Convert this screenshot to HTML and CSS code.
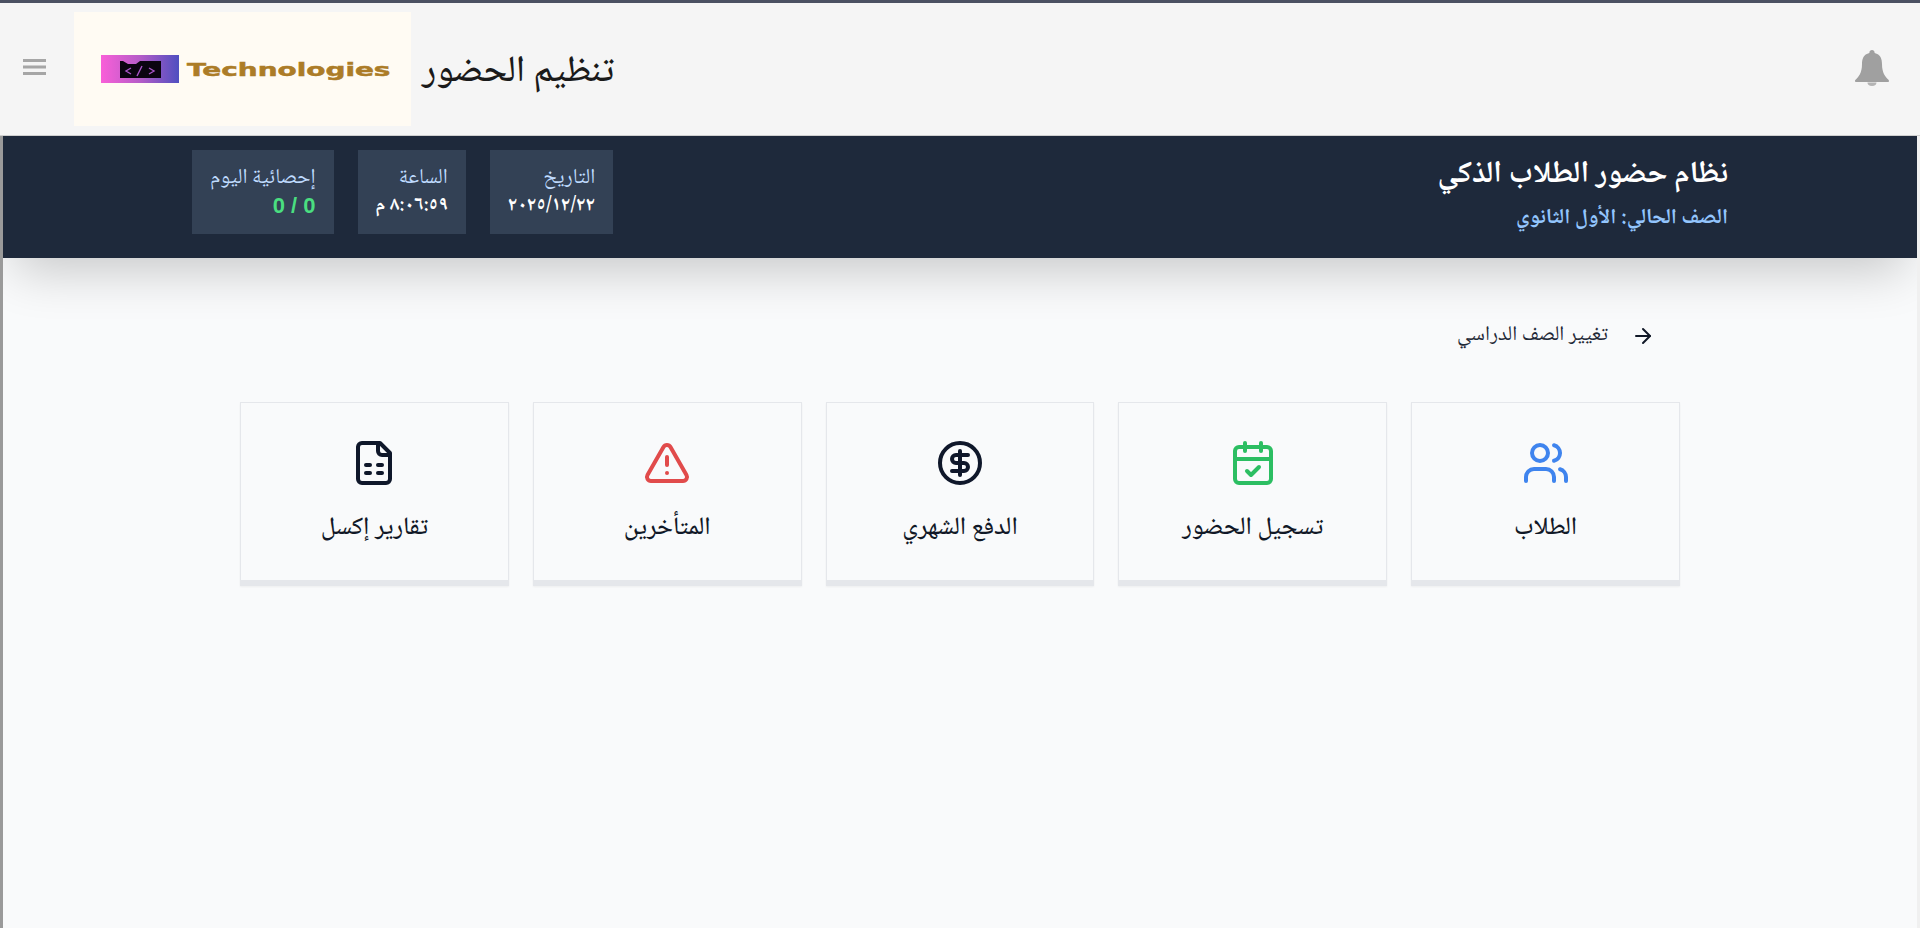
FILE: index.html
```html
<!DOCTYPE html>
<html lang="ar">
<head>
  <meta charset="UTF-8">
  <title>تنظيم الحضور</title>
  <link rel="stylesheet" href="styles.css">
</head>
<body>
  <div class="topline"></div>
  <header class="appbar">
    <div class="appbar-left">
      <button class="menu-btn" aria-label="menu">
        <svg width="24" height="24" viewBox="0 0 24 24" fill="#a6a6a6"><path d="M1 2h23v3H1zM1 8.500h23v3H1zM1 15h23v3H1z"/></svg>
      </button>
      <div class="logo">
        <div class="logo-mark">
          <svg width="41" height="17" viewBox="0 0 41 17">
            <path d="M0 0h3l5 3h8l4-3h21v17H0z" fill="#0a0410"/>
            <path d="M11 7l-5 3 5 3M17 15l5-10M29 7l5 3-5 3" fill="none" stroke="#a855c8" stroke-width="1.400"/>
          </svg>
        </div>
        <span class="logo-text">Technologies</span>
      </div>
      <h1 class="page-title">تنظيم الحضور</h1>
    </div>
    <svg class="bell" width="34" height="36" viewBox="0 0 34 36" fill="#a0a0a0">
      <path d="M17 0c1.500 0 2.600 1.100 2.600 2.600v.4C25.500 4.300 27 9 27 14c0 9 3.500 13 6.200 15.400.8.7.8 1.600.8 1.600 0 .6-.5 1-1.200 1H1.200C.5 32 0 31.600 0 31s0-.9.8-1.600C3.500 27 7 23 7 14c0-5 1.500-9.700 7.400-11v-.4C14.400 1.100 15.500 0 17 0z"/>
      <path d="M12.500 32.500h9a4.500 3.500 0 0 1-9 0z" fill="#b4b4b4"/>
    </svg>
  </header>

  <div class="page">
    <section class="banner">
      <div class="banner-inner">
        <div class="banner-title">
          <h2>نظام حضور الطلاب الذكي</h2>
          <p>الصف الحالي: الأول الثانوي</p>
        </div>
        <div class="stats">
          <div class="stat">
            <span class="stat-label">التاريخ</span>
            <strong class="stat-value">٢٠٢٥/١٢/٢٢</strong>
          </div>
          <div class="stat">
            <span class="stat-label">الساعة</span>
            <strong class="stat-value">٨:٠٦:٥٩ م</strong>
          </div>
          <div class="stat">
            <span class="stat-label">إحصائية اليوم</span>
            <strong class="stat-value green">0 / 0</strong>
          </div>
        </div>
      </div>
    </section>

    <main class="content">
      <button class="back-btn">
        <svg width="24" height="24" viewBox="0 0 24 24" fill="none" stroke="#111827" stroke-width="2" stroke-linecap="round" stroke-linejoin="round"><path d="M5 12h14"/><path d="m12 5 7 7-7 7"/></svg>
        <span>تغيير الصف الدراسي</span>
      </button>

      <div class="cards">
        <a class="card">
          <svg class="card-icon blue" viewBox="0 0 24 24"><path d="M16 21v-2a4 4 0 0 0-4-4H6a4 4 0 0 0-4 4v2"/><circle cx="9" cy="7" r="4"/><path d="M22 21v-2a4 4 0 0 0-3-3.870"/><path d="M16 3.130a4 4 0 0 1 0 7.750"/></svg>
          <span>الطلاب</span>
        </a>
        <a class="card">
          <svg class="card-icon green" viewBox="0 0 24 24"><path d="M8 2v4"/><path d="M16 2v4"/><rect x="3" y="4" width="18" height="18" rx="2"/><path d="M3 10h18"/><path d="m9 16 2 2 4-4"/></svg>
          <span>تسجيل الحضور</span>
        </a>
        <a class="card">
          <svg class="card-icon dark" viewBox="0 0 24 24"><circle cx="12" cy="12" r="10"/><path d="M16 8h-6a2 2 0 1 0 0 4h4a2 2 0 1 1 0 4H8"/><path d="M12 18V6"/></svg>
          <span>الدفع الشهري</span>
        </a>
        <a class="card">
          <svg class="card-icon red" viewBox="0 0 24 24"><path d="m21.730 18-8-14a2 2 0 0 0-3.480 0l-8 14A2 2 0 0 0 4 21h16a2 2 0 0 0 1.730-3"/><path d="M12 9v4"/><path d="M12 17h.01"/></svg>
          <span>المتأخرين</span>
        </a>
        <a class="card">
          <svg class="card-icon dark" viewBox="0 0 24 24"><path d="M15 2H6a2 2 0 0 0-2 2v16a2 2 0 0 0 2 2h12a2 2 0 0 0 2-2V7Z"/><path d="M14 2v4a2 2 0 0 0 2 2h4"/><path d="M8 13h2"/><path d="M14 13h2"/><path d="M8 17h2"/><path d="M14 17h2"/></svg>
          <span>تقارير إكسل</span>
        </a>
      </div>
    </main>
  </div>
</body>
</html>
```

FILE: styles.css
```css
* {
  box-sizing: border-box;
}

html, body {
  height: 100%;
}

body {
  margin: 0;
  font-family: "Noto Naskh Arabic", "Noto Sans Arabic", "DejaVu Sans", sans-serif;
  background-color: #f9fafb;
  color: #111827;
  overflow: hidden;
}

.topline {
  height: 3px;
  background-color: #4b5162;
}

.appbar {
  display: flex;
  align-items: center;
  justify-content: space-between;
  height: 133px;
  padding: 0 31px 0 22px;
  background-color: #f5f5f5;
  border-bottom: 1px solid #cfcfcf;
}

.appbar-left {
  display: flex;
  align-items: center;
}

.menu-btn {
  display: flex;
  padding: 0;
  border: none;
  background: none;
  margin-right: 28px;
}

.logo {
  display: flex;
  align-items: center;
  width: 337px;
  height: 114px;
  padding-left: 27px;
  background-color: #fffbf3;
}

.logo-mark {
  display: flex;
  align-items: center;
  justify-content: center;
  width: 78px;
  height: 28px;
  background: linear-gradient(90deg, #f95fd8, #b55cc8 50%, #4f4fc0);
}

.logo-text {
  margin-left: 8px;
  font-family: "DejaVu Sans", sans-serif;
  font-size: 18px;
  font-weight: 700;
  color: #ac7c27;
  -webkit-text-stroke: 0.5px #ac7c27;
  transform: scaleX(1.55);
  transform-origin: left center;
}

.page-title {
  margin: 6px 0 0 11px;
  font-size: 37px;
  font-weight: 500;
  color: #1a1a1a;
}

.bell {
  display: block;
  margin-top: -2px;
}

.page {
  height: 792px;
  border-left: 3px solid #9a9a9a;
  border-right: 3px solid #f0f0f0;
  overflow: hidden;
}

.banner {
  height: 122px;
  background-color: #1e293b;
  box-shadow: 0 25px 50px -12px rgba(0, 0, 0, 0.2);
}

.banner-inner {
  direction: rtl;
  display: flex;
  align-items: center;
  justify-content: space-between;
  width: 1536px;
  height: 100%;
  margin: 0 auto;
  padding-bottom: 10px;
}

.banner-title {
  margin-top: 2px;
}

.banner-title h2 {
  margin: 0;
  font-size: 30.400px;
  font-weight: 700;
  color: #fff;
}

.banner-title p {
  margin: -1px 0 0;
  font-size: 21.300px;
  font-weight: 700;
  color: #93c5fd;
}

.stats {
  display: flex;
  gap: 24px;
}

.stat {
  display: flex;
  flex-direction: column;
  height: 84px;
  padding: 14px 18px 0;
  background-color: #334155;
}

.stat-label {
  font-size: 21.200px;
  line-height: 28px;
  color: #bfdbfe;
}

.stat-value {
  font-size: 19.500px;
  line-height: 28px;
  color: #fff;
}

.stat-value.green {
  font-family: "Liberation Sans", sans-serif;
  font-size: 22px;
  color: #4ade80;
}

.content {
  direction: rtl;
  width: 1440px;
  margin: 0 auto;
}

.back-btn {
  display: flex;
  align-items: center;
  gap: 23px;
  margin: 60px 25px 0 0;
  padding: 0;
  border: none;
  background: none;
  font-family: inherit;
  font-size: 20.800px;
  color: #1f2937;
}

.cards {
  display: grid;
  grid-template-columns: repeat(5, 1fr);
  gap: 24px;
  margin-top: 49px;
}

.card {
  display: flex;
  flex-direction: column;
  align-items: center;
  height: 184px;
  padding-top: 36px;
  border: 1px solid #e5e7eb;
  border-bottom: 6px solid #e5e7eb;
  box-shadow: 0 1px 2px rgba(0, 0, 0, 0.05);
  font-size: 25px;
  font-weight: 500;
  color: #111827;
}

.card span {
  margin-top: 20px;
}

.card-icon {
  width: 48px;
  height: 48px;
  fill: none;
  stroke-width: 2;
  stroke-linecap: round;
  stroke-linejoin: round;
}

.card-icon.blue {
  stroke: #3f84ee;
}

.card-icon.green {
  stroke: #2cbe62;
}

.card-icon.dark {
  stroke: #0f172a;
}

.card-icon.red {
  stroke: #e14b4b;
}
```
